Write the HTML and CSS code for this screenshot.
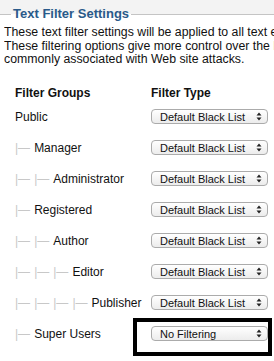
FILE: index.html
```
<!DOCTYPE html>
<html>
<head>
<meta charset="utf-8">
<link rel="stylesheet" href="styles.css">
</head>
<body>
<fieldset class="settings">
  <legend class="title">Text Filter Settings</legend>
  <p class="desc">These text filter settings will be applied to all text entered by users in the selected groups.<br>These filtering options give more control over the HTML your content publishers submit.<br>commonly associated with Web site attacks.</p>
  <div class="table">
    <div class="thead">
      <div class="th">Filter Groups</div>
      <div class="th">Filter Type</div>
    </div>
    <div class="rows">
      <div class="row"><div class="group">Public</div><div class="sel"><span>Default Black List</span><svg class="arr" width="6" height="9" viewBox="0 0 6 9"><path d="M3 0.5L5.5 3.5H0.5Z M3 8.5L5.5 5.5H0.5Z" fill="#222"/></svg></div></div>
      <div class="row"><div class="group"><span class="gi">|&mdash;</span>Manager</div><div class="sel"><span>Default Black List</span><svg class="arr" width="6" height="9" viewBox="0 0 6 9"><path d="M3 0.5L5.5 3.5H0.5Z M3 8.5L5.5 5.5H0.5Z" fill="#222"/></svg></div></div>
      <div class="row"><div class="group"><span class="gi">|&mdash;</span><span class="gi">|&mdash;</span>Administrator</div><div class="sel"><span>Default Black List</span><svg class="arr" width="6" height="9" viewBox="0 0 6 9"><path d="M3 0.5L5.5 3.5H0.5Z M3 8.5L5.5 5.5H0.5Z" fill="#222"/></svg></div></div>
      <div class="row"><div class="group"><span class="gi">|&mdash;</span>Registered</div><div class="sel"><span>Default Black List</span><svg class="arr" width="6" height="9" viewBox="0 0 6 9"><path d="M3 0.5L5.5 3.5H0.5Z M3 8.5L5.5 5.5H0.5Z" fill="#222"/></svg></div></div>
      <div class="row"><div class="group"><span class="gi">|&mdash;</span><span class="gi">|&mdash;</span>Author</div><div class="sel"><span>Default Black List</span><svg class="arr" width="6" height="9" viewBox="0 0 6 9"><path d="M3 0.5L5.5 3.5H0.5Z M3 8.5L5.5 5.5H0.5Z" fill="#222"/></svg></div></div>
      <div class="row"><div class="group"><span class="gi">|&mdash;</span><span class="gi">|&mdash;</span><span class="gi">|&mdash;</span>Editor</div><div class="sel"><span>Default Black List</span><svg class="arr" width="6" height="9" viewBox="0 0 6 9"><path d="M3 0.5L5.5 3.5H0.5Z M3 8.5L5.5 5.5H0.5Z" fill="#222"/></svg></div></div>
      <div class="row"><div class="group"><span class="gi">|&mdash;</span><span class="gi">|&mdash;</span><span class="gi">|&mdash;</span><span class="gi">|&mdash;</span>Publisher</div><div class="sel"><span>Default Black List</span><svg class="arr" width="6" height="9" viewBox="0 0 6 9"><path d="M3 0.5L5.5 3.5H0.5Z M3 8.5L5.5 5.5H0.5Z" fill="#222"/></svg></div></div>
      <div class="row highlighted"><div class="group"><span class="gi">|&mdash;</span>Super Users</div><div class="sel"><span>No Filtering</span><svg class="arr" width="6" height="9" viewBox="0 0 6 9"><path d="M3 0.5L5.5 3.5H0.5Z M3 8.5L5.5 5.5H0.5Z" fill="#222"/></svg></div><div class="mark"></div></div>
    </div>
  </div>
</fieldset>
</body>
</html>
```
FILE: styles.css
```
html, body {
  margin: 0;
  padding: 0;
  background: #f3f3f3;
  overflow: hidden;
  font-family: "Liberation Sans", Arial, sans-serif;
  color: #111;
}
.settings {
  box-sizing: border-box;
  height: calc(100vh - 4px);
  margin: 4px 0 0 0;
  padding: 2px 0 0 4px;
  border: none;
  border-top: 1px solid #c4c4c4;
  background: #fff;
}
.title {
  margin-left: 7px;
  padding: 0 2px;
  font-size: 13px;
  line-height: 20px;
  font-weight: bold;
  color: #2a5a8a;
}
.desc {
  margin: 0;
  font-size: 12.3px;
  line-height: 13.5px;
  white-space: nowrap;
  overflow: hidden;
}
.table {
  margin-top: 18px;
  position: relative;
}
.thead {
  display: grid;
  grid-template-columns: 147px 1fr;
  height: 16px;
  align-items: center;
  margin-bottom: 8px;
}
.th {
  font-size: 12px;
  font-weight: bold;
  padding-left: 11px;
}
.th + .th {
  padding-left: 0;
}
.rows {
  display: flex;
  flex-direction: column;
  gap: 15px;
}
.row {
  display: grid;
  grid-template-columns: 147px 117px;
  height: 16px;
  align-items: center;
  position: relative;
}
.group {
  font-size: 12px;
  padding-left: 11px;
  white-space: nowrap;
}
.gi {
  color: #c8c8c8;
  margin-right: 4px;
}
.sel {
  box-sizing: border-box;
  height: 15px;
  border: 1px solid #ababab;
  border-radius: 4px;
  background: linear-gradient(#ffffff, #ececec);
  display: flex;
  align-items: center;
  justify-content: space-between;
  padding: 0 5px 0 8px;
  font-size: 11px;
  color: #111;
}
.arr {
  display: block;
}
.mark {
  position: absolute;
  left: 129px;
  top: -8px;
  width: 131px;
  height: 30px;
  border: 4px solid #000;
}
```
